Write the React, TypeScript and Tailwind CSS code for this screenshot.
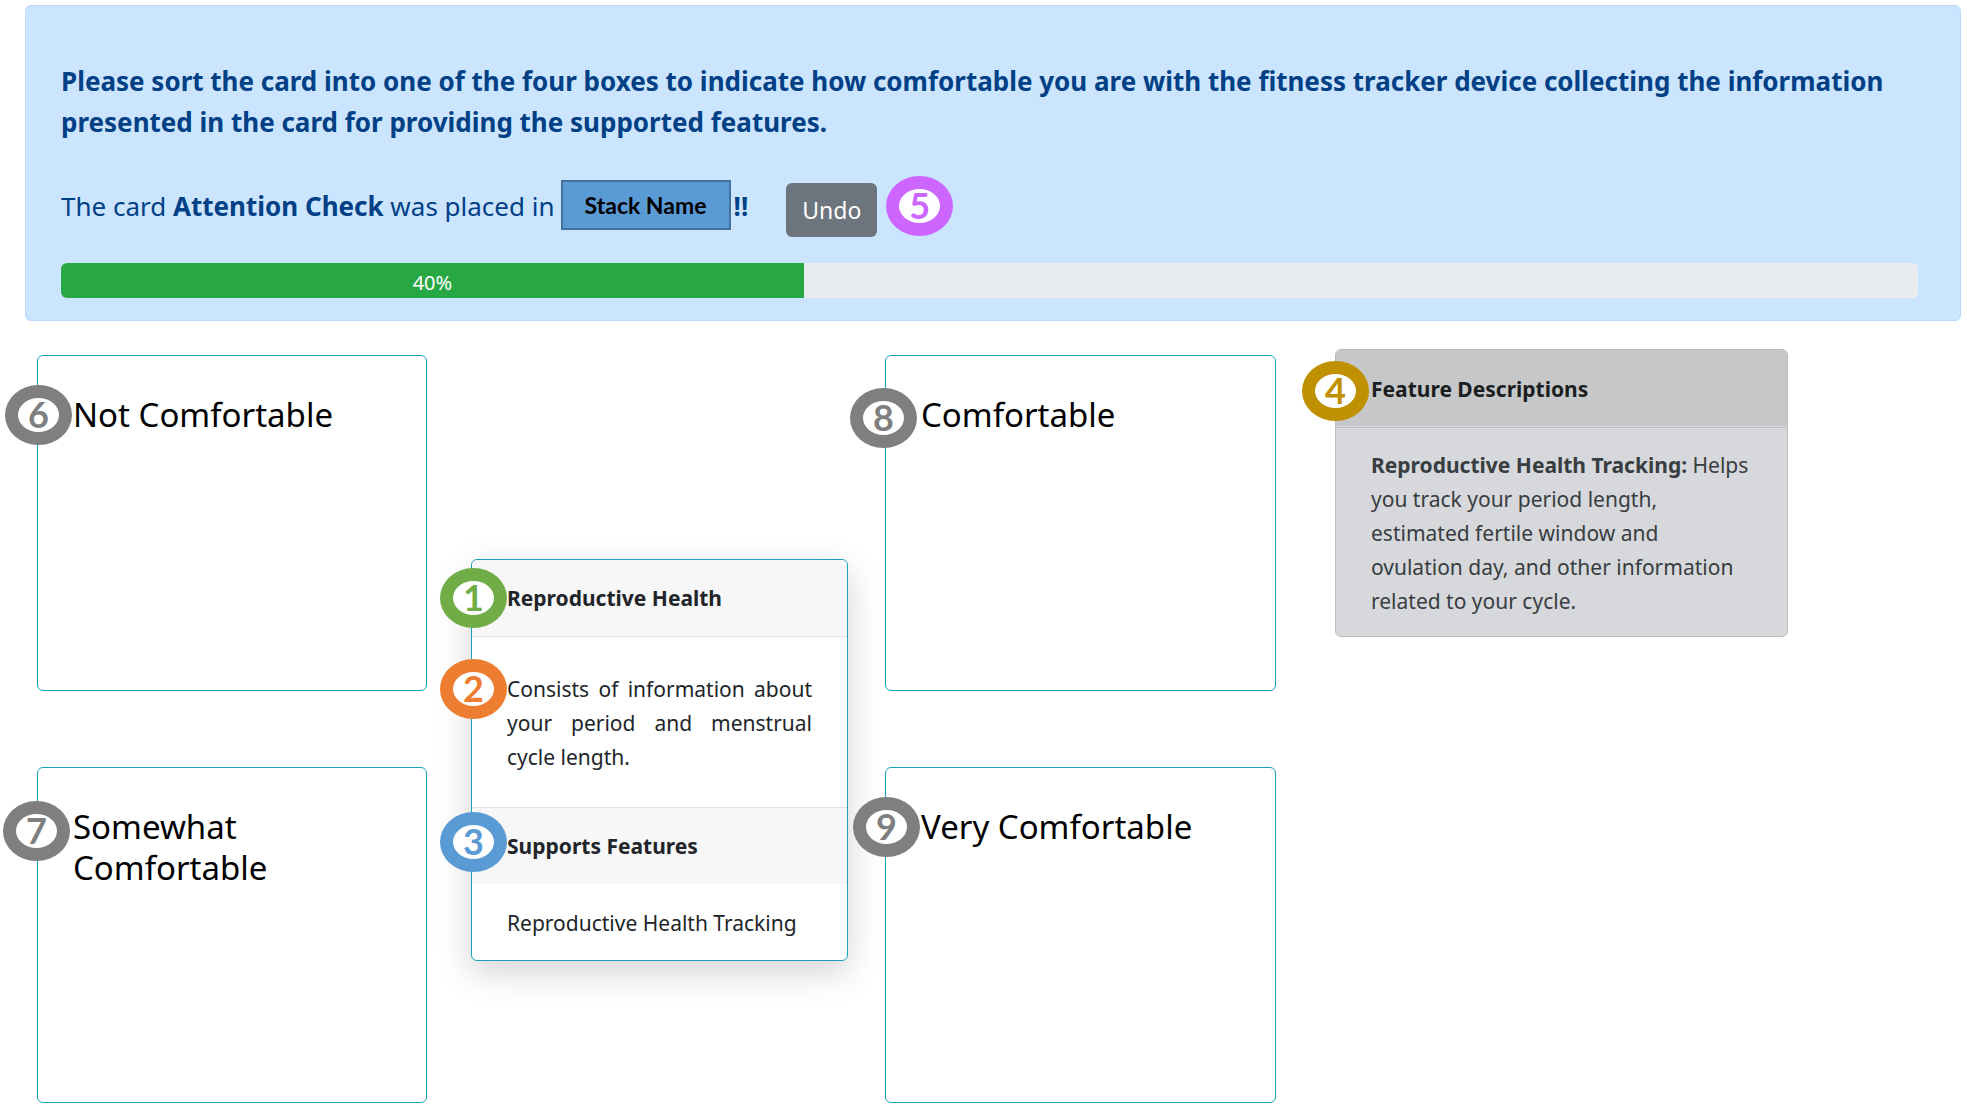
import React from "react";

type BadgeProps = { n: number; className: string };

function Badge({ n, className }: BadgeProps) {
  return (
    <span
      className={`flex h-[60px] w-[67px] items-center justify-center rounded-[50%] border-[13px] bg-white pb-0.5 font-['Lato',sans-serif] text-[36px] leading-none font-bold ${className}`}
    >
      {n}
    </span>
  );
}

type StackProps = { title: string; n: number; badgeClass: string };

function Stack({ title, n, badgeClass }: StackProps) {
  return (
    <section className="relative h-[336px] rounded-md border border-[#17a2b8] bg-white px-[35px] pt-[38px]">
      <Badge n={n} className={`absolute border-[#7f7f7f] text-[#7f7f7f] ${badgeClass}`} />
      <h2 className="text-[33px] leading-[41px] text-black">{title}</h2>
    </section>
  );
}

const PROGRESS = 40;

export default function App() {
  return (
    <main className="min-h-screen bg-white font-['Noto_Sans','Open_Sans',sans-serif] text-[21px] leading-[34px] text-[#212529]">
      <div className="pt-[5px] pr-[6px] pl-[25px]">
        <header className="rounded-md border border-[#b8daff] bg-[#cce5ff] pt-[55px] pr-[42px] pb-[22px] pl-[35px] text-[26px] leading-[41px] text-[#004085]">
          <p className="font-bold">
            Please sort the card into one of the four boxes to indicate how comfortable you are with the fitness
            tracker device collecting the information presented in the card for providing the supported features.
          </p>
          <div className="mt-8 flex items-center">
            <p>
              The card <strong>Attention Check</strong> was placed in
            </p>
            <span className="mb-0.5 ml-[6px] flex h-[50px] w-[170px] items-center justify-center border-2 border-[#41719c] bg-[#5b9bd5] font-['Lato',sans-serif] text-[23px] font-bold text-black">
              Stack Name
            </span>
            <strong className="ml-[3px]">!!</strong>
            <button
              type="button"
              className="mt-2 ml-[38px] h-[54px] rounded-md bg-[#6c757d] px-4 text-[23px] text-white"
            >
              Undo
            </button>
            <Badge n={5} className="ml-[9px] border-[#cc66ff] text-[#cc66ff]" />
          </div>
          <div
            role="progressbar"
            aria-label="Sorting progress"
            aria-valuenow={PROGRESS}
            aria-valuemin={0}
            aria-valuemax={100}
            className="mt-[26px] flex h-[35px] overflow-hidden rounded-md bg-[#e9ecef]"
          >
            <div
              className="flex items-center justify-center bg-[#28a745] pt-1 text-xl text-white"
              style={{ width: `${PROGRESS}%` }}
            >
              {PROGRESS}%
            </div>
          </div>
        </header>
      </div>

      <div className="grid grid-cols-[434fr_414fr_450fr_632fr] pl-[37px]">
        <div className="flex flex-col gap-[76px] pt-[34px] pr-11">
          <Stack title="Not Comfortable" n={6} badgeClass="-left-[33px] top-[29px]" />
          <Stack title="Somewhat Comfortable" n={7} badgeClass="-left-[35px] top-[33px]" />
        </div>

        <div className="pt-[238px] pr-[37px]">
          <article className="rounded-md border border-[#17a2b8] bg-white shadow-[0_11px_34px_rgba(0,0,0,0.175)]">
            <div className="relative rounded-t-md border-b border-[#dfdfdf] bg-[#f7f7f7] px-[35px] py-[21px]">
              <Badge n={1} className="absolute top-2 -left-8 border-[#70ad47] text-[#70ad47]" />
              <h3 className="font-bold">Reproductive Health</h3>
            </div>
            <div className="relative px-[35px] pt-[35px] pb-[33px]">
              <Badge n={2} className="absolute top-[22px] -left-8 border-[#ed7d31] text-[#ed7d31]" />
              <p className="text-justify">Consists of information about your period and menstrual cycle length.</p>
            </div>
            <div className="relative border-t border-[#dfdfdf] bg-[#f7f7f7] px-[35px] py-[21px]">
              <Badge n={3} className="absolute top-1 -left-8 border-[#5b9bd5] text-[#5b9bd5]" />
              <h3 className="font-bold">Supports Features</h3>
            </div>
            <p className="px-[35px] pt-[22px] pb-5">Reproductive Health Tracking</p>
          </article>
        </div>

        <div className="flex flex-col gap-[76px] pt-[34px] pr-[59px]">
          <Stack title="Comfortable" n={8} badgeClass="-left-[36px] top-[32px]" />
          <Stack title="Very Comfortable" n={9} badgeClass="-left-[33px] top-[29px]" />
        </div>

        <div className="pt-7 pr-[179px]">
          <aside className="rounded-md border border-[#babbbe] bg-[#d6d8db] text-[#383d41]">
            <div className="relative rounded-t-md border-b border-[#d6d8db] bg-[#c6c7c8] px-[35px] pt-[22px] pb-5">
              <Badge n={4} className="absolute top-[11px] -left-[34px] border-[#bf9000] text-[#bf9000]" />
              <h3 className="font-bold text-[#1b1e21]">Feature Descriptions</h3>
            </div>
            <div className="border-t border-[#babbbe] px-[35px] pt-5 pb-[18px]">
              <p>
                <strong>Reproductive Health Tracking:</strong> Helps you track your period length, estimated fertile
                window and ovulation day, and other information related to your cycle.
              </p>
            </div>
          </aside>
        </div>
      </div>
    </main>
  );
}
